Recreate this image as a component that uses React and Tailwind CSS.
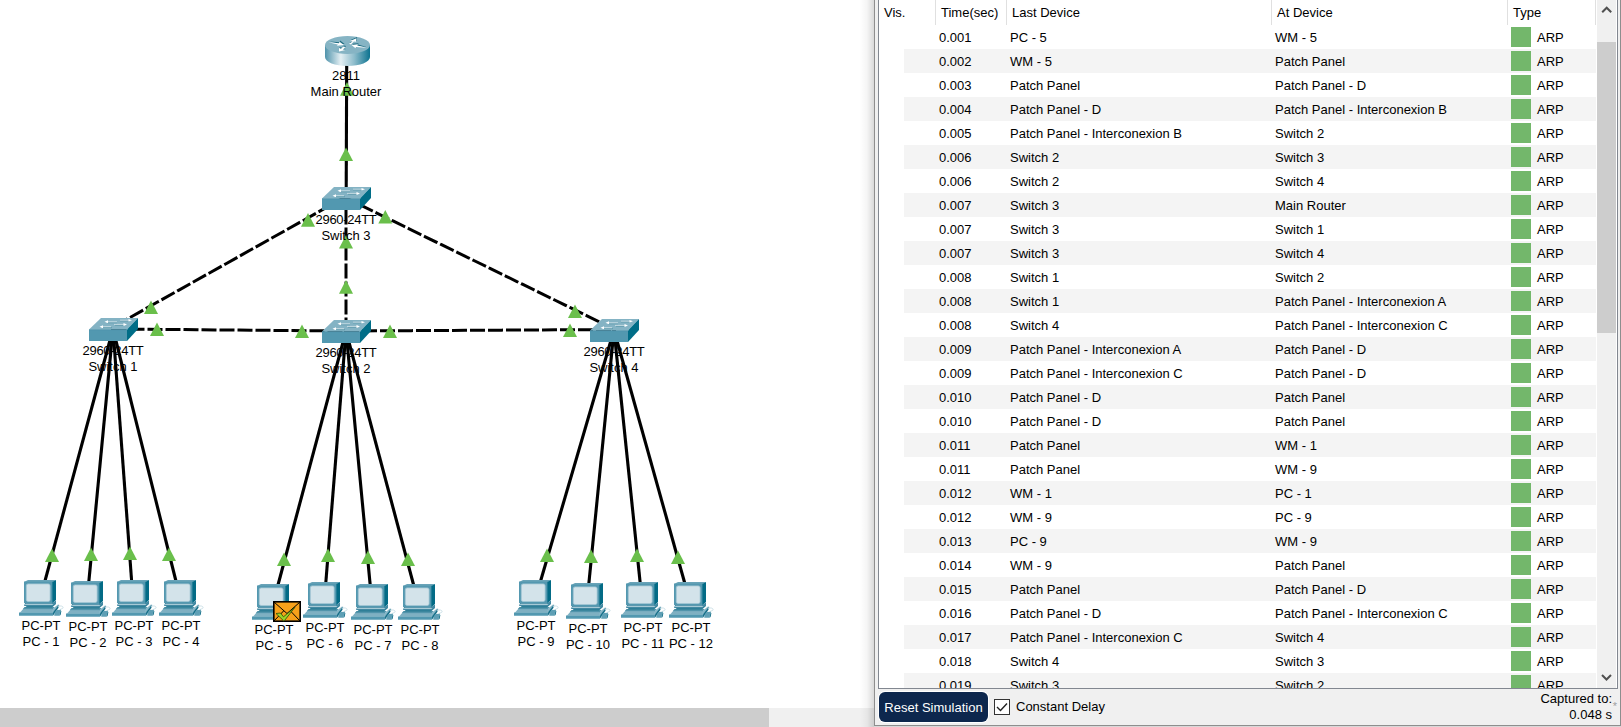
import React from "react";

const EVENTS = [
  ["0.001", "PC - 5", "WM - 5"],
  ["0.002", "WM - 5", "Patch Panel"],
  ["0.003", "Patch Panel", "Patch Panel - D"],
  ["0.004", "Patch Panel - D", "Patch Panel - Interconexion B"],
  ["0.005", "Patch Panel - Interconexion B", "Switch 2"],
  ["0.006", "Switch 2", "Switch 3"],
  ["0.006", "Switch 2", "Switch 4"],
  ["0.007", "Switch 3", "Main Router"],
  ["0.007", "Switch 3", "Switch 1"],
  ["0.007", "Switch 3", "Switch 4"],
  ["0.008", "Switch 1", "Switch 2"],
  ["0.008", "Switch 1", "Patch Panel - Interconexion A"],
  ["0.008", "Switch 4", "Patch Panel - Interconexion C"],
  ["0.009", "Patch Panel - Interconexion A", "Patch Panel - D"],
  ["0.009", "Patch Panel - Interconexion C", "Patch Panel - D"],
  ["0.010", "Patch Panel - D", "Patch Panel"],
  ["0.010", "Patch Panel - D", "Patch Panel"],
  ["0.011", "Patch Panel", "WM - 1"],
  ["0.011", "Patch Panel", "WM - 9"],
  ["0.012", "WM - 1", "PC - 1"],
  ["0.012", "WM - 9", "PC - 9"],
  ["0.013", "PC - 9", "WM - 9"],
  ["0.014", "WM - 9", "Patch Panel"],
  ["0.015", "Patch Panel", "Patch Panel - D"],
  ["0.016", "Patch Panel - D", "Patch Panel - Interconexion C"],
  ["0.017", "Patch Panel - Interconexion C", "Switch 4"],
  ["0.018", "Switch 4", "Switch 3"],
  ["0.019", "Switch 3", "Switch 2"],
];

// Straight-through links: x1, y1, x2, y2
const SOLID = [
  [346.7, 60, 346.2, 190],
  [113, 329, 44.7, 582],
  [113, 329, 88.7, 583],
  [113, 329, 131.7, 582],
  [113, 329, 176.2, 582],
  [346, 331, 277.7, 586],
  [346, 331, 325.7, 584],
  [346, 331, 370.3, 586],
  [346, 331, 413.9, 586],
  [614, 330, 540.3, 582],
  [614, 330, 588.7, 585],
  [614, 330, 640.3, 584],
  [614, 330, 685, 584],
];

// Crossover links
const DASHED = [
  [113, 329, 346, 331],
  [345.5, 331, 614, 329.5],
  [346, 331, 346, 198],
  [346, 196.5, 113, 327],
  [614, 329, 346, 198],
];

// Link lights: centre x, base y
const LIGHTS = [
  [347, 95.7], [346, 161], [308, 226.7], [385.3, 223.5], [346, 248.5], [346, 293.7],
  [151, 314], [157, 336], [302, 338], [390, 338], [575, 318], [570, 337],
  [52, 562], [91, 561], [130, 560], [169, 561],
  [284, 566], [328, 562], [368, 564], [408, 566],
  [547, 562], [591, 563], [637, 562], [678, 564],
];

const SWITCHES = [
  ["Switch 3", 322, 187],
  ["Switch 1", 89, 318],
  ["Switch 2", 322, 320],
  ["Switch 4", 590, 319],
];

const PCS = [
  [1, 24, 580], [2, 71, 581], [3, 117, 580], [4, 164, 580],
  [5, 257, 584], [6, 308, 582], [7, 356, 584], [8, 403, 584],
  [9, 519, 580], [10, 571, 583], [11, 626, 582], [12, 674, 582],
];

function Router() {
  return (
    <svg className="absolute" style={{ left: 325, top: 35 }} width="46" height="32" viewBox="0 0 46 32">
      <defs>
        <linearGradient id="routerBody" x1="0" x2="1" y1="0" y2="0">
          <stop offset="0" stopColor="#4f93ab" />
          <stop offset="0.35" stopColor="#e4eff3" />
          <stop offset="0.65" stopColor="#8dbccb" />
          <stop offset="1" stopColor="#0d7390" />
        </linearGradient>
      </defs>
      <path d="M0 10V22C0 27 10 31 22.5 31S45 27 45 22V10Z" fill="url(#routerBody)" />
      <ellipse cx="22.5" cy="10" rx="22.5" ry="9" fill="#86b4c4" />
      <g fill="#1c6a80" transform="translate(.6 -1)">
        <path d="M4 7.5L14 8.2L14.5 6.5L19 10L12 11L12.8 9.6Z" />
        <path d="M41 13L31 12L30.5 13.5L26.5 9.8L33 9.2L32.3 10.6Z" />
        <path d="M24 9L27.5 6.5L25 6L31.5 3L31 7L29 6.8L26 9.8Z" />
        <path d="M20.5 12L18 14.5L20.5 15L14 16.8L14 13L16 13.7L18.2 11.5Z" />
      </g>
      <g fill="#fff">
        <path d="M3.5 7.2L14 8.2L14.5 6.7L19 10L12 10.8L12.8 9.6Z" />
        <path d="M41.5 12.8L31 12L30.5 13.3L26.5 10L33 9.3L32.3 10.6Z" />
        <path d="M24 8.8L27.5 6.5L25 6L31.5 3.2L31 6.8L29 6.6L26 9.5Z" />
        <path d="M20.5 12L18 14.5L20.5 15L14 16.5L14 13L16 13.7L18.2 11.5Z" />
      </g>
    </svg>
  );
}

function Switch({ x, y }) {
  return (
    <svg className="absolute" style={{ left: x, top: y }} width="49" height="23" viewBox="0 0 49 23">
      <path d="M0 11.5L12 0H49L38 11.5Z" fill="#84b3c4" />
      <path d="M38 11.5L49 0V11L38 23Z" fill="#006d87" />
      <path d="M0 11.5H38V23H0Z" fill="#5298b0" />
      <path d="M0 11.7H38" stroke="#4a8fa7" strokeWidth=".6" />
      <path d="M18 4.8H28M31 2.9H40M13 9.7H23M26 7.2H35" stroke="#4f8fa4" strokeWidth=".7" />
      <path d="M17 3.8H28M31 2.2H40M12 8.7H22M25 6.4H35" stroke="#fff" strokeOpacity=".8" strokeWidth=".7" />
      <path d="M15.5 3.8L19 2.3V5.3ZM43 2.2L39.5.9V3.6ZM10.5 8.7L14 7.2V10.2ZM38 6.4L34.5 5V7.9Z" fill="#fff" />
    </svg>
  );
}

function Computer({ x, y }) {
  return (
    <svg className="absolute" style={{ left: x - 5, top: y }} width="46" height="37" viewBox="0 0 46 37">
      <path d="M5 2L9 0H37L33.5 2Z" fill="#69a3b8" />
      <path d="M33 2L37 0V20L33 23.5Z" fill="#036b86" />
      <path d="M10 24H33L37 21V24L33 27.5H6Z" fill="#2f7f98" />
      <rect x="5" y="1.6" width="28.4" height="21.4" fill="#5498b0" />
      <rect x="7.3" y="3.9" width="23.8" height="17.6" rx="1.8" fill="#d3e3ea" stroke="#a3c7d4" strokeWidth=".8" />
      <path d="M6 23L33 23L37 20.5V23.5L33 26H5Z" fill="#4389a2" />
      <path d="M7 23.7H33L34.5 25H5Z" fill="#a7cad6" />
      <path d="M5.3 27.2H35.5L34 29H4Z" fill="#1d738e" />
      <path d="M4.5 28.6H34L39 24.5L40.5 25L34.8 32.8H.8Z" fill="#86b6c7" />
      <path d="M4 29.5H34M3 31H33" stroke="#6ea6ba" strokeWidth=".6" />
      <path d="M0 32.5H34V35.8H0Z" fill="#5298b0" />
      <path d="M34 32.5L39.5 25.3V27.8L34 35.8Z" fill="#176f89" />
      <path d="M39 26.5C43 24.8 45.5 27.5 43.3 28.6C41.5 29.3 40 29.5 40.5 31" fill="none" stroke="#c3dae2" strokeWidth=".8" />
      <path d="M35.5 33L37.5 30L41.8 29.8L40.3 35.8H35.2Z" fill="#5e9fb5" />
      <path d="M40.3 35.8L41.8 29.8L42.3 31.5L41.6 35Z" fill="#16718b" />
    </svg>
  );
}

function Packet() {
  return (
    <svg className="absolute" style={{ left: 273, top: 601 }} width="28" height="21" viewBox="0 0 28 21">
      <rect x=".8" y=".8" width="26.4" height="19.4" fill="#f7a11a" stroke="#000" strokeWidth="1.6" />
      <path d="M1 1L14 12.5L27 1M1 20L10.5 10M27 20L17.5 10" fill="none" stroke="#000" strokeWidth="1" />
      <path d="M3 12.5L7.5 12L10.5 15.8L22 6.2L11 20.2Z" fill="#9bd328" stroke="#2d4a08" strokeWidth=".8" />
    </svg>
  );
}

function Label({ x, y, lines, tight = false }) {
  return (
    <div
      className="absolute flex w-24 -translate-x-1/2 flex-col items-center leading-4 whitespace-nowrap"
      style={{ left: x, top: y }}
    >
      {lines.map((line, i) => (
        <span key={line} className={tight && i === 0 ? "tracking-[-0.3px]" : ""}>
          {line}
        </span>
      ))}
    </div>
  );
}

function Topology() {
  return (
    <div className="relative min-h-0 flex-1 overflow-hidden bg-white">
      <svg className="absolute inset-0" width="874" height="708">
        <g stroke="#000" strokeWidth="3.1">
          {SOLID.map(([x1, y1, x2, y2], i) => (
            <line key={i} x1={x1} y1={y1} x2={x2} y2={y2} />
          ))}
        </g>
        <g stroke="#000" strokeWidth="3" strokeDasharray="12 6" strokeLinecap="square">
          {DASHED.map(([x1, y1, x2, y2], i) => (
            <line key={i} x1={x1} y1={y1} x2={x2} y2={y2} />
          ))}
        </g>
        <g fill="#6abf4b">
          {LIGHTS.map(([x, y], i) => (
            <path key={i} d={`M${x} ${y - 13.6}L${x + 7} ${y}H${x - 7}Z`} />
          ))}
        </g>
      </svg>
      <Router />
      <Label x={346} y={68} lines={["2811", "Main Router"]} />
      {SWITCHES.map(([name, x, y]) => (
        <React.Fragment key={name}>
          <Switch x={x} y={y} />
          <Label x={x + 24} y={y + 25} lines={["2960-24TT", name]} tight />
        </React.Fragment>
      ))}
      {PCS.map(([n, x, y]) => (
        <React.Fragment key={n}>
          <Computer x={x} y={y} />
          <Label x={x + 17} y={y + 38} lines={["PC-PT", `PC - ${n}`]} />
        </React.Fragment>
      ))}
      <Packet />
    </div>
  );
}

function EventList() {
  return (
    <div className="flex h-[689px] shrink-0 overflow-hidden border-x border-b border-[#828790] bg-white">
      <div className="w-[717px] shrink-0">
        <div className="grid h-[25px] grid-cols-[57px_71px_265px_236px_88px] leading-[25px]">
          <span className="border-r border-[#e0e0e0] pl-[5px]">Vis.</span>
          <span className="border-r border-[#e0e0e0] pl-[5px]">Time(sec)</span>
          <span className="border-r border-[#e0e0e0] pl-[5px]">Last Device</span>
          <span className="border-r border-[#e0e0e0] pl-[5px]">At Device</span>
          <span className="border-r border-[#e0e0e0] pl-[5px]">Type</span>
        </div>
        {EVENTS.map(([time, last, at], i) => (
          <div
            key={i}
            className={`ml-[25px] grid h-6 w-[692px] grid-cols-[35px_71px_265px_236px_85px] leading-[25px] whitespace-nowrap ${i % 2 ? "bg-[#f4f4f4]" : "bg-white"}`}
          >
            <span />
            <span>{time}</span>
            <span>{last}</span>
            <span>{at}</span>
            <span className="flex gap-[6px]">
              <span className="mt-[2px] size-5 bg-[#73b76b]" />
              ARP
            </span>
          </div>
        ))}
      </div>
      <div className="ml-[1px] flex w-[19px] shrink-0 flex-col items-center bg-[#f0f0f0]">
        <svg className="my-[1px] h-10 w-[19px] shrink-0" viewBox="0 0 19 40">
          <path d="M5.2 11.2L9.7 6.7L14.2 11.2" fill="none" stroke="#505050" strokeWidth="2" />
        </svg>
        <div className="h-[291px] w-full bg-[#cdcdcd]" />
        <svg className="mt-auto h-5 w-[19px]" viewBox="0 0 19 20">
          <path d="M5 7L9.5 11.5L14 7" fill="none" stroke="#505050" strokeWidth="2" />
        </svg>
      </div>
    </div>
  );
}

export default function App() {
  return (
    <div className="flex h-[727px] w-[1621px] overflow-hidden bg-white font-['Liberation_Sans',Arial,sans-serif] text-[13px] text-black">
      <main className="relative flex w-[874px] shrink-0 flex-col">
        <Topology />
        <div className="h-[19px] shrink-0 bg-[#f0f0f0]">
          <div className="h-full w-[769px] bg-[#cdcdcd]" />
        </div>
        <div className="absolute inset-y-0 right-0 w-[14px] bg-linear-to-r from-transparent via-black/4 to-black/15" />
      </main>
      <aside className="flex flex-1 flex-col bg-[#d8d8d8]">
        <div className="flex h-[726px] flex-col border-x border-b border-[#8e8e8e] bg-[#f0f0f0] pr-[2px] pl-[3px]">
          <EventList />
          <div className="flex flex-1 items-start">
            <button className="mt-[3px] ml-[1px] h-[30px] w-[109px] rounded-[6px] bg-[#0d274d] pt-[2px] text-center whitespace-nowrap text-white ring-1 ring-white">
              Reset Simulation
            </button>
            <label className="mt-[10px] ml-[6px] flex items-center gap-[6px] leading-4">
              <span className="flex size-4 items-center justify-center border border-[#333] bg-white">
                <svg width="12" height="10" viewBox="0 0 12 10">
                  <path d="M1 5L4.5 8.5L11 1.5" fill="none" stroke="#222" strokeWidth="1.4" />
                </svg>
              </span>
              Constant Delay
            </label>
            <div className="mt-[2px] ml-auto text-right leading-4">
              <div>Captured to:</div>
              <div>0.048 s</div>
            </div>
            <span className="mt-[9px] w-[6px] text-center text-[11px] leading-4 text-[#a0a0a0]">*</span>
          </div>
        </div>
      </aside>
    </div>
  );
}
